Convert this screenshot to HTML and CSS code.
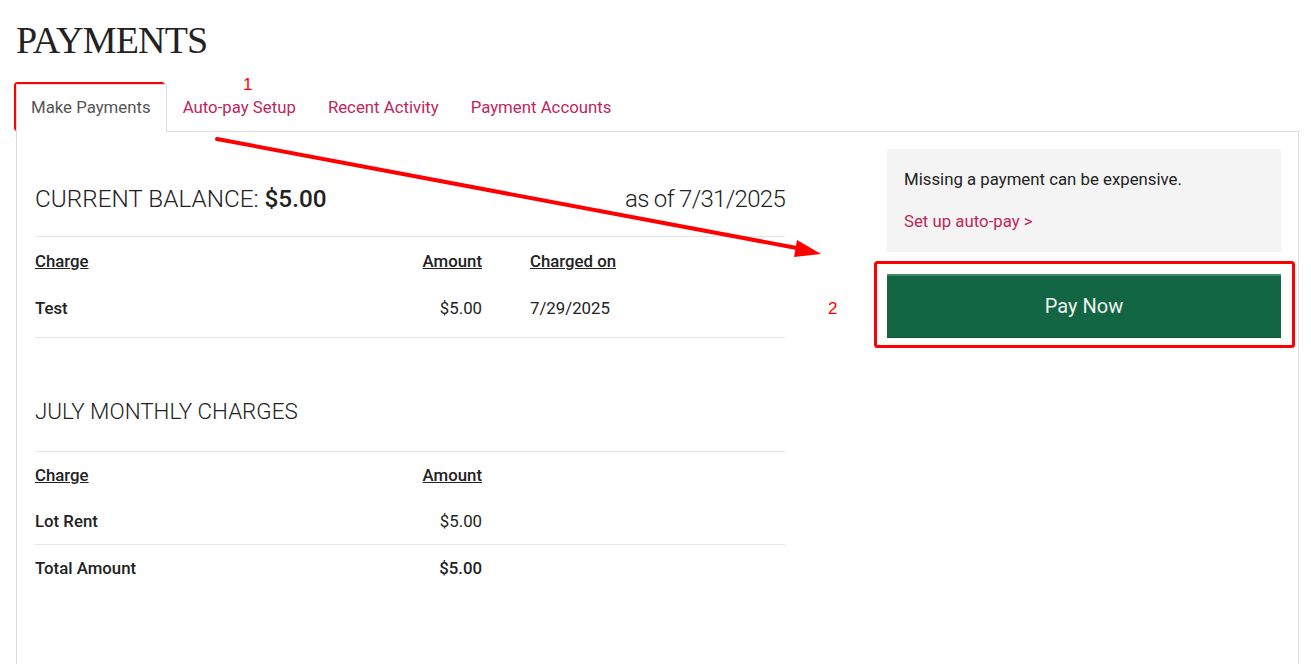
FILE: index.html
```html
<!DOCTYPE html>
<html lang="en">
<head>
<meta charset="utf-8">
<title>Payments</title>
<link rel="stylesheet" href="styles.css">
</head>
<body>
<div class="page">
  <h1 class="title">PAYMENTS</h1>
  <nav class="tabs">
    <a class="tab active">Make Payments</a>
    <a class="tab">Auto-pay Setup</a>
    <a class="tab">Recent Activity</a>
    <a class="tab">Payment Accounts</a>
  </nav>
  <div class="panel">
    <div class="main">
      <div class="balance">
        <h2 class="balance-title">CURRENT BALANCE: <strong>$5.00</strong></h2>
        <div class="asof">as of 7/31/2025</div>
      </div>
      <div class="table first">
        <div class="trow head">
          <span class="c1">Charge</span><span class="c2">Amount</span><span class="c3">Charged on</span>
        </div>
        <div class="trow">
          <span class="c1 b">Test</span><span class="c2">$5.00</span><span class="c3">7/29/2025</span>
        </div>
      </div>
      <h2 class="section-title">JULY MONTHLY CHARGES</h2>
      <div class="table second">
        <div class="trow head">
          <span class="c1">Charge</span><span class="c2">Amount</span><span class="c3"></span>
        </div>
        <div class="trow">
          <span class="c1 b">Lot Rent</span><span class="c2">$5.00</span><span class="c3"></span>
        </div>
        <div class="trow total">
          <span class="c1 b">Total Amount</span><span class="c2 b">$5.00</span><span class="c3"></span>
        </div>
      </div>
    </div>
    <aside class="side">
      <div class="notice">
        <p class="notice-text">Missing a payment can be expensive.</p>
        <a class="notice-link">Set up auto-pay &gt;</a>
      </div>
      <button class="pay">Pay Now</button>
    </aside>
  </div>
</div>
<svg class="annot" width="1311" height="664" viewBox="0 0 1311 664" xmlns="http://www.w3.org/2000/svg">
  <rect x="15.5" y="83.5" width="148" height="46" rx="2" fill="none" stroke="#ff0000" stroke-width="3"/>
  <text x="243" y="90" fill="#ff0000" font-family="Liberation Sans, sans-serif" font-size="17">1</text>
  <line x1="217" y1="139" x2="802" y2="249" stroke="#ff0000" stroke-width="4" stroke-linecap="round"/>
  <polygon points="821,254 797,240 794,257" fill="#ff0000"/>
  <text x="828" y="314" fill="#ff0000" font-family="Liberation Sans, sans-serif" font-size="17">2</text>
  <rect x="875.5" y="262.5" width="418" height="84" rx="2" fill="none" stroke="#ff0000" stroke-width="3"/>
</svg>
</body>
</html>
```
FILE: styles.css
```css
html, body {
  margin: 0;
  padding: 0;
  background: #fff;
}
body {
  font-family: Roboto, "Liberation Sans", sans-serif;
  color: #222;
  position: relative;
}
.page {
  padding: 0 12px 0 16px;
}
.title {
  margin: 0;
  padding-top: 18px;
  font-family: "Roboto Slab", "Liberation Serif", serif;
  font-weight: 400;
  font-size: 38px;
  line-height: 44px;
  letter-spacing: -0.8px;
  color: #222;
}
.tabs {
  display: flex;
  margin-top: 22px;
}
.tab {
  display: block;
  padding: 11px 15px 13px 15px;
  line-height: 22px;
  font-size: 16.8px;
  color: #c0265a;
  border: 1px solid transparent;
  border-bottom: 0;
}
.tab.active {
  padding-left: 14px;
  color: #555;
  border-color: #ddd;
  background: #fff;
  margin-bottom: -1px;
  position: relative;
  z-index: 1;
}
.panel {
  border: 1px solid #ddd;
  border-bottom: 0;
  padding: 17px 17px 0 18px;
  display: grid;
  grid-template-columns: 750px 394px;
  justify-content: space-between;
  min-height: 520px;
}
.balance {
  display: flex;
  justify-content: space-between;
  align-items: baseline;
  padding: 36px 0 23px;
  border-bottom: 1px solid #e3e3e3;
}
.balance-title {
  margin: 0;
  font-weight: 300;
  font-size: 24.3px;
  line-height: 28px;
}
.balance-title strong {
  font-weight: 500;
}
.asof {
  font-weight: 300;
  font-size: 24px;
  line-height: 28px;
  letter-spacing: -0.7px;
}
.table {
  font-size: 16.8px;
}
.table.first {
  border-bottom: 1px solid #e3e3e3;
  padding-bottom: 7px;
}
.trow {
  display: grid;
  grid-template-columns: 367px 80px 303px;
  line-height: 22px;
  padding: 13px 0 11px;
}
.trow.head {
  padding: 13px 0 12px;
}
.trow.head span {
  font-weight: 500;
  text-decoration: underline;
}
.second .trow {
  padding: 11px 0 12px;
}
.second .trow.head {
  padding: 12px 0 13px;
}
.second .trow.total {
  border-top: 1px solid #e3e3e3;
  padding: 12px 0 11px;
}
.c2 {
  text-align: right;
}
.c3 {
  padding-left: 48px;
}
.b {
  font-weight: 500;
}
.section-title {
  margin: 0;
  padding: 60px 0 27px;
  font-weight: 300;
  font-size: 22.4px;
  line-height: 26px;
  border-bottom: 1px solid #e3e3e3;
}
.side {
  display: flex;
  flex-direction: column;
}
.notice {
  background: #f4f4f4;
  padding: 19px 17px 17px;
  height: 103px;
  box-sizing: border-box;
}
.notice-text {
  margin: 0 0 20px;
  font-size: 16.8px;
  line-height: 22px;
  color: #222;
}
.notice-link {
  font-size: 16.8px;
  line-height: 22px;
  color: #c0265a;
}
.pay {
  margin-top: 22px;
  height: 64px;
  border: 0;
  border-top: 2px solid #3e8a64;
  border-bottom: 1px solid #0d4f33;
  background: #136644;
  color: #f0f0f0;
  font-family: Roboto, sans-serif;
  font-size: 20px;
  padding: 0 0 1px;
}
.annot {
  position: absolute;
  left: 0;
  top: 0;
  pointer-events: none;
}
```
